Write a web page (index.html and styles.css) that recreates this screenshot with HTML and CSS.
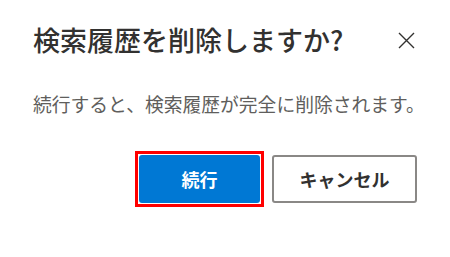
FILE: index.html
```html
<!DOCTYPE html>
<html lang="ja">
<head>
<meta charset="UTF-8" /><meta name="viewport" content="width=device-width,initial-scale=1" />
<title>検索履歴を削除しますか?</title>
<link rel="stylesheet" href="styles.css">
</head>
<body>
  <div class="dialog" role="dialog" aria-labelledby="dlg-title">
    <div class="dialog-head">
      <h1 id="dlg-title">検索履歴を削除しますか?</h1>
      <button class="close" aria-label="閉じる">
        <svg width="17" height="17" viewBox="0 0 17 17" aria-hidden="true"><path d="M1 1L16 16M16 1L1 16" stroke="#323130" stroke-width="1.4" fill="none"/></svg>
      </button>
    </div>
    <p class="message">続行すると、検索履歴が完全に削除されます。</p>
    <div class="actions">
      <span class="focus-ring"><button class="btn primary">続行</button></span>
      <button class="btn">キャンセル</button>
    </div>
  </div>
</body>
</html>
```

FILE: styles.css
```css
:root {
  --text:#323130;
  --text-sub:#605e5c;
  --primary:#0078d4;
  --border:#8a8886;
}
*,*::before,*::after{box-sizing:border-box;}
body {
  margin:0;background:#fff;color:var(--text);
  font-family:'Noto Sans CJK JP','Noto Sans',sans-serif;
}
.dialog {
  width:450px;padding:22px 33px 0 33px;
}
.dialog-head {
  display:flex;justify-content:space-between;align-items:center;
}
h1 {
  margin:0;font-size:27px;line-height:36px;font-weight:500;color:var(--text);
}
.close {
  background:none;border:0;padding:0;width:17px;height:17px;margin-right:2px;cursor:pointer;display:flex;
}
.message {
  margin:34px 0 0;font-size:18.8px;line-height:24px;color:var(--text-sub);white-space:nowrap;
}
.actions {
  display:flex;justify-content:flex-end;align-items:center;gap:8px;margin-top:35px;
}
.focus-ring {
  display:flex;border:3px solid #ff0000;padding:1px;
}
.btn {
  font-family:inherit;font-size:18px;font-weight:700;height:48px;border-radius:3px;
  background:#fff;color:var(--text);border:2px solid var(--border);width:145px;cursor:pointer;
}
.btn.primary {
  width:121px;background:var(--primary);color:#fff;border-color:var(--primary);
}
```
